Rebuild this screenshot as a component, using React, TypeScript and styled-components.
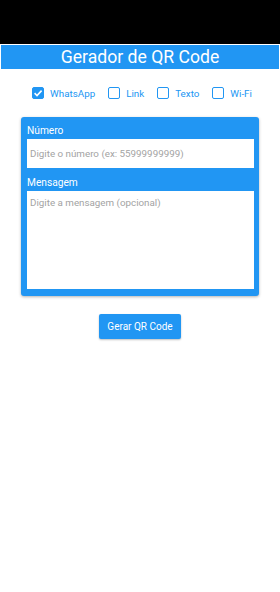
import React, { useState } from "react";
import styled, { createGlobalStyle } from "styled-components";

const GlobalStyle = createGlobalStyle`
    html, body {
        margin: 0;
        padding: 0;
        background: #ffffff;
        font-family: Roboto, "Noto Sans", sans-serif;
    }
`;

const BLUE = "#2196f3";

const Page = styled.div`
    width: 280px;
    min-height: 592px;
    display: flex;
    flex-direction: column;
    align-items: center;
`;

const StatusBar = styled.div`
    align-self: stretch;
    height: 44px;
    background: #000000;
`;

const Header = styled.h1`
    align-self: stretch;
    margin: 1px 1px 0;
    height: 24px;
    background: ${BLUE};
    color: #ffffff;
    font-size: 17.6px;
    font-weight: 400;
    line-height: 25px;
    text-align: center;
`;

const TypeRow = styled.div`
    display: flex;
    align-items: center;
    gap: 13px;
    margin: 18px 0 0 4px;
    height: 12px;
`;

const Option = styled.label`
    display: flex;
    align-items: center;
    gap: 6px;
    color: ${BLUE};
    font-size: 9.8px;
    cursor: pointer;
`;

const Box = styled.span<{ $checked: boolean }>`
    width: 12px;
    height: 12px;
    box-sizing: border-box;
    border-radius: 2px;
    border: 1.5px solid ${BLUE};
    background: ${(p) => (p.$checked ? BLUE : "#ffffff")};
    display: flex;
    align-items: center;
    justify-content: center;
`;

const Card = styled.div`
    margin-top: 18px;
    width: 238px;
    box-sizing: border-box;
    padding: 0 5px 7px 6px;
    background: ${BLUE};
    border-radius: 3px;
    box-shadow: 0 1px 3px rgba(0, 0, 0, 0.3);
`;

const FieldLabel = styled.div<{ $first?: boolean }>`
    color: #ffffff;
    font-size: 10.2px;
    line-height: 16px;
    padding-top: ${(p) => (p.$first ? "6px" : "7px")};
`;

const Input = styled.input`
    display: block;
    width: 100%;
    height: 29px;
    box-sizing: border-box;
    border: none;
    outline: none;
    padding: 0 3px;
    font-family: inherit;
    font-size: 9.8px;
    color: #333333;
    background: #ffffff;
    &::placeholder {
        color: #a3a3a3;
    }
`;

const TextArea = styled.textarea`
    display: block;
    width: 100%;
    height: 98px;
    box-sizing: border-box;
    border: none;
    outline: none;
    resize: none;
    padding: 6px 3px;
    font-family: inherit;
    font-size: 9.8px;
    color: #333333;
    background: #ffffff;
    &::placeholder {
        color: #a3a3a3;
    }
`;

const Button = styled.button`
    margin-top: 18px;
    width: 82px;
    height: 25px;
    border: none;
    border-radius: 2px;
    background: ${BLUE};
    color: #ffffff;
    font-family: inherit;
    font-size: 10px;
    box-shadow: 0 1px 2px rgba(0, 0, 0, 0.25);
    cursor: pointer;
`;

const types = ["WhatsApp", "Link", "Texto", "Wi-Fi"];

function Check() {
    return (
        <svg width="10" height="10" viewBox="0 0 10 10">
            <path d="M1.6 5.2 L4 7.5 L8.6 2.6" fill="none" stroke="#fff" strokeWidth="1.6" />
        </svg>
    );
}

export default function App() {
    const [type, setType] = useState("WhatsApp");

    return (
        <Page>
            <GlobalStyle />
            <StatusBar />
            <Header>Gerador de QR Code</Header>
            <TypeRow>
                {types.map((t) => (
                    <Option key={t} onClick={() => setType(t)}>
                        <Box $checked={type === t}>{type === t && <Check />}</Box>
                        {t}
                    </Option>
                ))}
            </TypeRow>
            <Card>
                <FieldLabel $first>Número</FieldLabel>
                <Input placeholder="Digite o número (ex: 55999999999)" />
                <FieldLabel>Mensagem</FieldLabel>
                <TextArea placeholder="Digite a mensagem (opcional)" />
            </Card>
            <Button>Gerar QR Code</Button>
        </Page>
    );
}
